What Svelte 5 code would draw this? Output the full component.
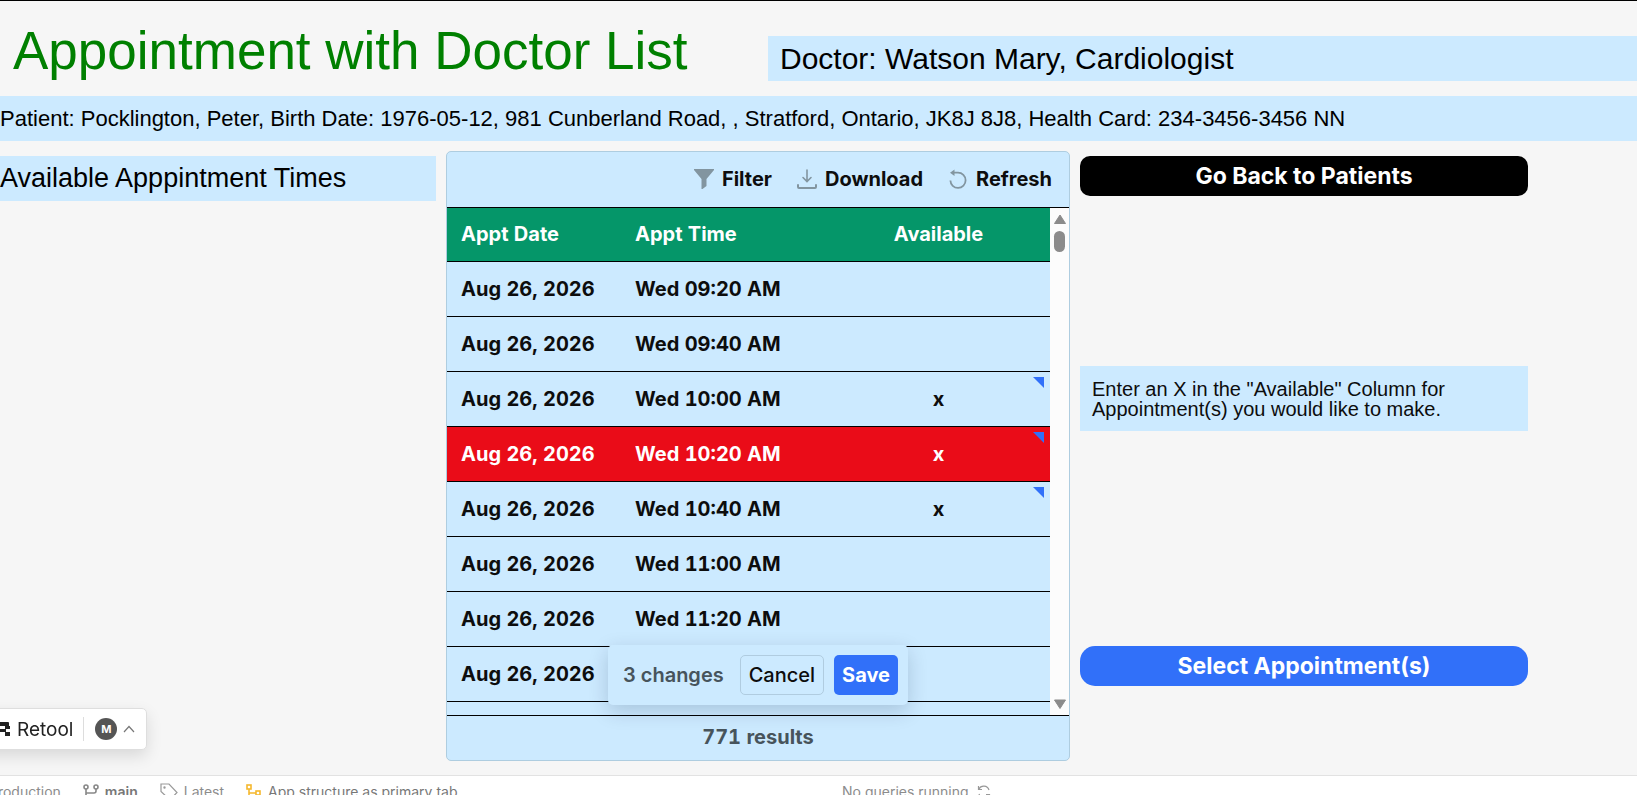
<script lang="ts">
  type Slot = {
    date: string;
    time: string;
    available: string;
    selected?: boolean;
  };

  let slots: Slot[] = $state([
    { date: 'Aug 26, 2026', time: 'Wed 09:20 AM', available: '' },
    { date: 'Aug 26, 2026', time: 'Wed 09:40 AM', available: '' },
    { date: 'Aug 26, 2026', time: 'Wed 10:00 AM', available: 'x' },
    { date: 'Aug 26, 2026', time: 'Wed 10:20 AM', available: 'x', selected: true },
    { date: 'Aug 26, 2026', time: 'Wed 10:40 AM', available: 'x' },
    { date: 'Aug 26, 2026', time: 'Wed 11:00 AM', available: '' },
    { date: 'Aug 26, 2026', time: 'Wed 11:20 AM', available: '' },
    { date: 'Aug 26, 2026', time: '', available: '' },
    { date: '', time: '', available: '' }
  ]);

  let changes = $derived(slots.filter((s) => s.available).length);

  function cancel() {
    slots.forEach((s) => (s.available = ''));
  }
</script>

<div class="page">
  <header>
    <h1>Appointment with Doctor List</h1>
    <p class="bar doctor">Doctor: Watson Mary, Cardiologist</p>
  </header>

  <p class="bar patient">
    Patient: Pocklington, Peter, Birth Date: 1976-05-12, 981 Cunberland Road, , Stratford, Ontario, JK8J 8J8, Health Card: 234-3456-3456 NN
  </p>

  <main>
    <section class="left">
      <h2 class="bar">Available Apppintment Times</h2>
    </section>

    <section class="card">
      <div class="toolbar">
        <button>
          <svg width="20" height="20" viewBox="0 0 20 20"><path d="M0 0H20V1L12.500 10V17L8.500 20H7.500V10L0 1Z" fill="#8295a0" /></svg>
          Filter
        </button>
        <button>
          <svg width="20" height="20" viewBox="0 0 20 20" fill="none" stroke="#8295a0" stroke-width="2" stroke-linecap="round"><path d="M10 1V12M6 8.500L10 12.500L14 8.500" stroke-width="1.600" /><path d="M1 16V18Q1 19 2 19H18Q19 19 19 18V16" /></svg>
          Download
        </button>
        <button>
          <svg width="20" height="20" viewBox="0 0 20 20" fill="none" stroke="#8295a0" stroke-width="1.800"><path d="M5 3.700H10A7.600 7.600 0 1 1 2.400 11.500" /><path d="M2 3.700L6.500 0.500V7Z" fill="#8295a0" stroke="none" /></svg>
          Refresh
        </button>
      </div>

      <div class="grid-area">
        <div class="viewport">
          <table>
            <thead>
              <tr>
                <th class="date">Appt Date</th>
                <th class="time">Appt Time</th>
                <th class="available">Available</th>
              </tr>
            </thead>
            <tbody>
              {#each slots as slot}
                <tr class:selected={slot.selected}>
                  <td>{slot.date}</td>
                  <td>{slot.time}</td>
                  <td class="available">
                    {slot.available}
                    {#if slot.available}<span class="edited"></span>{/if}
                  </td>
                </tr>
              {/each}
            </tbody>
          </table>
        </div>
        <div class="scrollbar">
          <svg width="14" height="12" viewBox="0 0 14 12"><path d="M7 2L12.500 10.500H1.500Z" fill="#8b8b8b" stroke="#8b8b8b" stroke-linejoin="round" /></svg>
          <div class="thumb"></div>
          <svg class="down" width="14" height="12" viewBox="0 0 14 12"><path d="M7 10.500L12.500 2H1.500Z" fill="#8b8b8b" stroke="#8b8b8b" stroke-linejoin="round" /></svg>
        </div>
        <div class="changes">
          <span>{changes} changes</span>
          <button class="cancel" onclick={cancel}>Cancel</button>
          <button class="save">Save</button>
        </div>
      </div>

      <div class="results">771 results</div>
    </section>

    <section class="side">
      <button class="back">Go Back to Patients</button>
      <p class="info">Enter an X in the "Available" Column for Appointment(s) you would like to make.</p>
      <button class="select">Select Appointment(s)</button>
    </section>
  </main>

  <footer>
    <div class="status">
      <span>Production</span>
      <span class="branch">
        <svg width="16" height="16" viewBox="0 0 16 16" fill="none" stroke="#888" stroke-width="1.600"><circle cx="3" cy="3" r="2" /><circle cx="13" cy="3" r="2" /><circle cx="3" cy="13.500" r="2" /><path d="M3 5V11.500M13 5V7Q13 9 11 9H3" /></svg>
        main
      </span>
      <span class="tag">
        <svg width="18" height="18" viewBox="0 0 18 18" fill="none" stroke="#999" stroke-width="1.200"><path d="M1 1H9L17 9.500L10 17L1 8.500Z" /><circle cx="4.500" cy="4.500" r="0.600" /></svg>
        Latest
      </span>
      <span class="structure">
        <svg width="16" height="16" viewBox="0 0 16 16" fill="none" stroke="#f5b82e" stroke-width="1.600"><rect x="1" y="1" width="4" height="4" /><rect x="10" y="7" width="4" height="4" /><path d="M3 5V13.500H10M3 9H10" /></svg>
        App structure as primary tab
      </span>
    </div>
    <div class="queries">
      No queries running
      <svg width="14" height="14" viewBox="0 0 14 14" fill="none" stroke="#999" stroke-width="1.200"><path d="M1.500 1V4.500H5M1.800 4.300A5.500 5.500 0 0 1 12 5M12.500 13V9.500H9M12.200 9.700A5.500 5.500 0 0 1 2 9" /></svg>
    </div>
  </footer>

  <div class="badge">
    <svg width="22" height="16" viewBox="0 0 22 16" fill="#222"><path d="M0 1H20Q21 1 21 2V5H22V8H18V11H22V15H17V11H10V8H17V5H10V4H0Z" /></svg>
    <span class="brand">Retool</span>
    <span class="avatar">M</span>
    <svg width="12" height="8" viewBox="0 0 12 8" fill="none" stroke="#777" stroke-width="1.200"><path d="M1 7L6 1.500L11 7" /></svg>
  </div>
</div>

<style>
  :global(body) {
    margin: 0;
    overflow: hidden;
    background: #f6f6f6;
  }

  .page {
    border-top: 1px solid #000;
    background: #f6f6f6;
    color: #0d0d0d;
    font-family: Inter, sans-serif;
  }

  h1, h2, p {
    margin: 0;
    font-weight: 400;
  }

  button {
    font-family: inherit;
    border: none;
    cursor: pointer;
    white-space: nowrap;
  }

  header {
    display: grid;
    grid-template-columns: 768fr 869fr;
    align-items: end;
    padding-top: 19px;
  }

  h1 {
    padding-left: 13px;
    font: 53px/61px 'Liberation Sans', Arial, sans-serif;
    color: green;
    white-space: nowrap;
  }

  .bar {
    height: 45px;
    background: #cceaff;
    font: 27px/45px 'Liberation Sans', Arial, sans-serif;
    color: #000;
    white-space: nowrap;
  }

  .doctor {
    padding-left: 12px;
    font-size: 30px;
  }

  .patient {
    margin-top: 15px;
    font-size: 22px;
  }

  main {
    display: grid;
    grid-template-columns: 436fr 624fr 448fr;
    gap: 10px;
    padding: 10px 109px 14px 0;
  }

  .left, .side {
    padding-top: 5px;
    min-width: 0;
  }

  .card {
    border: 1px solid #aecde0;
    border-radius: 5px;
    background: #cceaff;
    overflow: hidden;
  }

  .toolbar {
    display: flex;
    justify-content: flex-end;
    align-items: center;
    gap: 25px;
    height: 55px;
    padding: 0 17px 2px 0;
    box-sizing: border-box;
  }

  .toolbar button {
    display: flex;
    align-items: center;
    gap: 8px;
    padding: 0;
    background: none;
    color: #0d0d0d;
    font-size: 20px;
    font-weight: 700;
  }

  .grid-area {
    position: relative;
    display: flex;
    height: 507px;
    border-top: 1px solid #000;
    border-bottom: 1px solid #000;
  }

  .viewport {
    flex: 1;
    overflow: hidden;
  }

  table {
    width: 100%;
    border-spacing: 0;
    table-layout: fixed;
    font-size: 20px;
    font-weight: 700;
    font-variant-numeric: tabular-nums;
  }

  th, td {
    height: 54px;
    padding: 0 0 0 14px;
    border-bottom: 1px solid #000;
    text-align: left;
    white-space: nowrap;
  }

  th {
    height: 51px;
    padding-bottom: 2px;
    background: #059669;
    color: #fff;
    font-weight: 700;
  }

  .date {
    width: 160px;
  }

  .time {
    width: 192px;
  }

  .available {
    position: relative;
    padding-left: 0;
    text-align: center;
  }

  .selected td {
    background: #ea0c18;
    color: #fff;
  }

  .edited {
    position: absolute;
    top: 5px;
    right: 6px;
    width: 11px;
    height: 11px;
    background: #3170f9;
    clip-path: polygon(0 0, 100% 0, 100% 100%);
  }

  .scrollbar {
    display: flex;
    flex-direction: column;
    align-items: center;
    width: 19px;
    padding: 5px 0;
    box-sizing: border-box;
    background: #fcfcfc;
  }

  .thumb {
    width: 11px;
    height: 21px;
    margin-top: 6px;
    border-radius: 6px;
    background: #8b8b8b;
  }

  .down {
    margin-top: auto;
  }

  .changes {
    position: absolute;
    bottom: 10px;
    left: 50%;
    transform: translateX(-50%);
    display: flex;
    align-items: center;
    gap: 10px;
    padding: 10px 10px 10px 15px;
    border-radius: 5px;
    background: #cceaff;
    box-shadow: 0 6px 20px rgba(0, 30, 60, 0.18);
    color: #47545c;
    font-size: 20px;
    font-weight: 600;
    white-space: nowrap;
  }

  .changes span {
    margin-right: 6px;
  }

  .changes button {
    height: 40px;
    padding: 0 8px;
    border-radius: 5px;
    font-size: 20px;
    font-weight: 500;
  }

  .changes .cancel {
    border: 1px solid #b0cce0;
    background: #cceaff;
    color: #0d0d0d;
  }

  .changes .save {
    background: #3170f9;
    color: #fff;
    font-weight: 700;
  }

  .results {
    height: 44px;
    color: #47545c;
    font-size: 20px;
    font-weight: 700;
    line-height: 42px;
    text-align: center;
    font-variant-numeric: tabular-nums;
  }

  .side button {
    display: block;
    width: 100%;
    height: 40px;
    color: #fff;
    font-size: 23px;
    font-weight: 700;
  }

  .side .back {
    border-radius: 10px;
    background: #000;
  }

  .info {
    margin: 170px 0 215px;
    padding: 13px 60px 12px 12px;
    background: #cceaff;
    font: 20px/20px 'Liberation Sans', Arial, sans-serif;
    color: #0d0d0d;
  }

  .side .select {
    border-radius: 15px;
    background: #3170f9;
  }

  footer {
    display: grid;
    grid-template-columns: 842fr 795fr;
    height: 32px;
    border-top: 1px solid #e2e2e2;
    background: #fff;
    color: #8c8c8c;
    font-size: 14px;
    line-height: 32px;
  }

  .status, .status span, .queries {
    display: flex;
    align-items: center;
  }

  .status {
    gap: 22px;
    margin-left: -11px;
    white-space: nowrap;
  }

  .status span {
    gap: 6px;
  }

  .branch {
    color: #777;
    font-weight: 600;
  }

  .structure {
    color: #777;
  }

  .queries {
    gap: 8px;
  }

  /* floating account badge, partly off the left edge */
  .badge {
    position: fixed;
    left: -21px;
    bottom: 45px;
    display: flex;
    align-items: center;
    height: 40px;
    padding: 0 11px 0 8px;
    border: 1px solid #dedede;
    border-radius: 5px;
    background: #fff;
    box-shadow: 0 6px 16px rgba(0, 0, 0, 0.12);
  }

  .brand {
    margin: 0 11px 0 7px;
    color: #222;
    font-size: 19px;
  }

  .avatar {
    position: relative;
    width: 22px;
    height: 22px;
    margin: 0 6px 0 11px;
    border-radius: 50%;
    background: #555;
    color: #fff;
    font-size: 11px;
    font-weight: 700;
    line-height: 22px;
    text-align: center;
  }

  .avatar::before {
    content: '';
    position: absolute;
    top: -1px;
    left: -12px;
    width: 1px;
    height: 24px;
    background: #ddd;
  }
</style>
